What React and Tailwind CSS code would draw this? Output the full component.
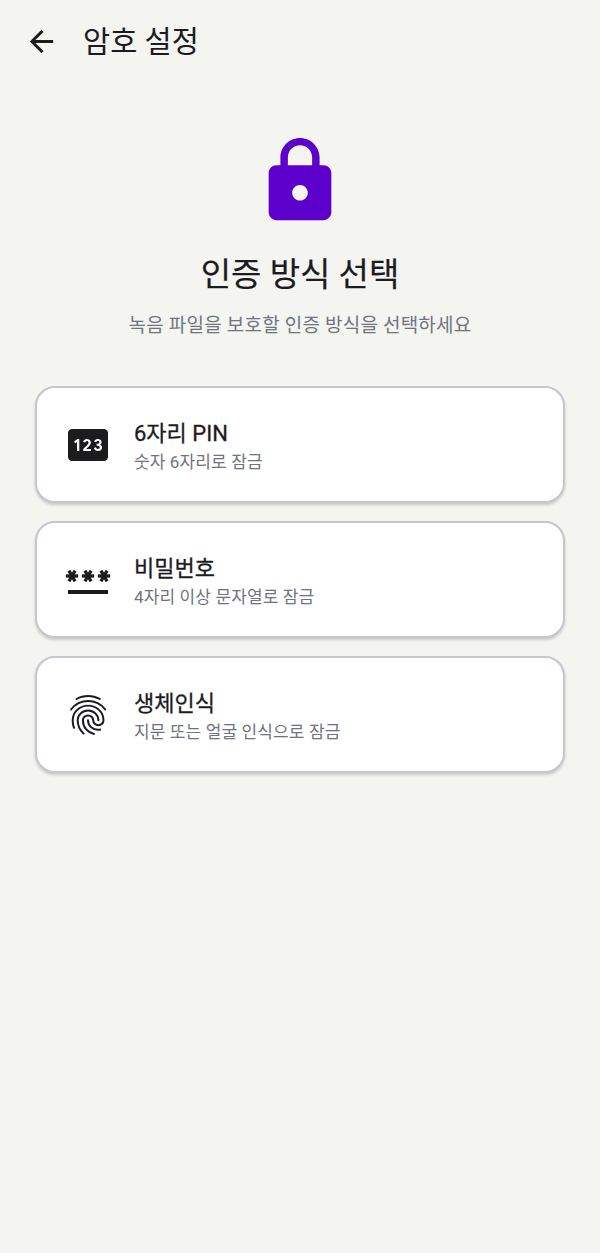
import React from "react";
import { MdArrowBack, MdLock, MdPin } from "react-icons/md";

const PasswordIcon = ({ className }) => (
  <svg viewBox="0 -960 960 960" fill="currentColor" className={className}>
    <path d="M80-200v-80h800v80H80Z" />
    <path stroke="currentColor" strokeWidth="6" d="M126-442l-52-30 34-60H40v-60h68l-34-58 52-30 34 58 34-58 52 30-34 58h68v60h-68l34 60-52 30-34-60-34 60Zm320 0-52-30 34-60h-68v-60h68l-34-58 52-30 34 58 34-58 52 30-34 58h68v60h-68l34 60-52 30-34-60-34 60Zm320 0-52-30 34-60h-68v-60h68l-34-58 52-30 34 58 34-58 52 30-34 58h68v60h-68l34 60-52 30-34-60-34 60Z" />
  </svg>
);

const FingerprintIcon = ({ className }) => (
  <svg viewBox="0 -960 960 960" fill="currentColor" className={className}>
    <path d="M481-781q106 0 200 45.5T838-604q7 9 4.5 16t-8.5 12q-6 5-14 4.5t-14-8.5q-55-78-141.5-119.5T481-741q-97 0-182 41.5T158-580q-6 9-14 10t-14-4q-7-5-8.5-12.5T126-602q62-85 155.5-132T481-781Zm0 94q135 0 232 90t97 223q0 50-35.5 83.5T688-257q-51 0-87.5-33.5T564-374q0-33-24.5-55.5T481-452q-34 0-58.5 22.5T398-374q0 97 57.5 162T604-121q9 3 12 10t1 15q-2 7-8 12t-15 3q-104-26-170-103.5T358-374q0-50 36-84t87-34q51 0 87 34t36 84q0 33 25 55.5t59 22.5q34 0 58-22.5t24-55.5q0-116-85-195t-203-79q-118 0-203 79t-85 194q0 24 4.5 60t21.5 84q3 9-.5 16T208-205q-8 3-15.5-.5T182-217q-15-39-21.5-77.5T154-374q0-133 96.5-223T481-687Zm0-192q64 0 125 15.5T724-819q9 5 10.5 12t-1.5 14q-3 7-10 11t-17-1q-53-27-109.5-41.5T481-839q-58 0-114 13.5T260-783q-8 5-16 2.5T232-791q-4-8-2-14.5t10-11.5q56-30 117-46t124-16Zm0 289q93 0 160 62.5T708-374q0 9-5.5 14.5T688-354q-8 0-14-5.5t-6-14.5q0-75-55-125.5T481-550q-77 0-132 50.5T294-374q0 81 28 137.5T404-123q6 6 6 14t-6 14q-6 6-14 6t-14-6q-59-62-90.5-126.5T254-374q0-91 66.5-153.5T481-590Zm-1 196q9 0 14.5 6t5.5 14q0 75 54 123t126 48q6 0 17-1t23-3q9-2 15.5 2.5T744-191q2 8-3 14t-13 8q-18 5-31.5 5.5t-16.5.5q-89 0-154.5-60T460-374q0-8 5.5-14t14.5-6Z" />
  </svg>
);

const items = [
  { Icon: MdPin, title: "6자리 PIN", sub: "숫자 6자리로 잠금" },
  { Icon: PasswordIcon, title: "비밀번호", sub: "4자리 이상 문자열로 잠금" },
  { Icon: FingerprintIcon, title: "생체인식", sub: "지문 또는 얼굴 인식으로 잠금" },
];

export default function App() {
  return (
    <div className="w-[600px] h-[1253px] bg-[#f4f4f0] flex flex-col font-['Roboto','Noto_Sans_CJK_KR',sans-serif] text-[#1c1b1f]">
      <header className="h-[82px] flex items-center pl-[24px] gap-[24px] shrink-0">
        <MdArrowBack className="w-[35px] h-[35px] shrink-0 text-[#1c1b1f]" />
        <h1 className="text-[29.5px] leading-[40px] font-normal pt-[2px]">암호 설정</h1>
      </header>
      <div className="flex flex-col items-center pt-[52px]">
        <MdLock className="w-[94px] h-[94px] text-[#5e00cc]" />
        <h2 className="mt-[25px] text-[33px] leading-[44px] font-normal [-webkit-text-stroke:0.2px]">인증 방식 선택</h2>
        <p className="mt-[16px] text-[19px] leading-[26px] tracking-[0.2px] text-[#6f7480]">녹음 파일을 보호할 인증 방식을 선택하세요</p>
      </div>
      <div className="mt-[47px] px-[35px] flex flex-col gap-[18px]">
        {items.map(({ Icon, title, sub }) => (
          <div
            key={title}
            className="h-[117px] rounded-[20px] bg-white border-2 border-[#cac4d0] shadow-[0_2px_3px_rgba(0,0,0,0.18)] flex items-center pl-[27px] gap-[22px]"
          >
            <Icon className="w-[48px] h-[48px] shrink-0 text-[#1c1b1f]" />
            <div className="flex flex-col gap-[1px] pt-[3px]">
              <div className="text-[22px] leading-[30px] font-normal [-webkit-text-stroke:0.3px]">{title}</div>
              <div className="text-[17px] leading-[24px] tracking-[0.12px] text-[#6f7480]">{sub}</div>
            </div>
          </div>
        ))}
      </div>
    </div>
  );
}
